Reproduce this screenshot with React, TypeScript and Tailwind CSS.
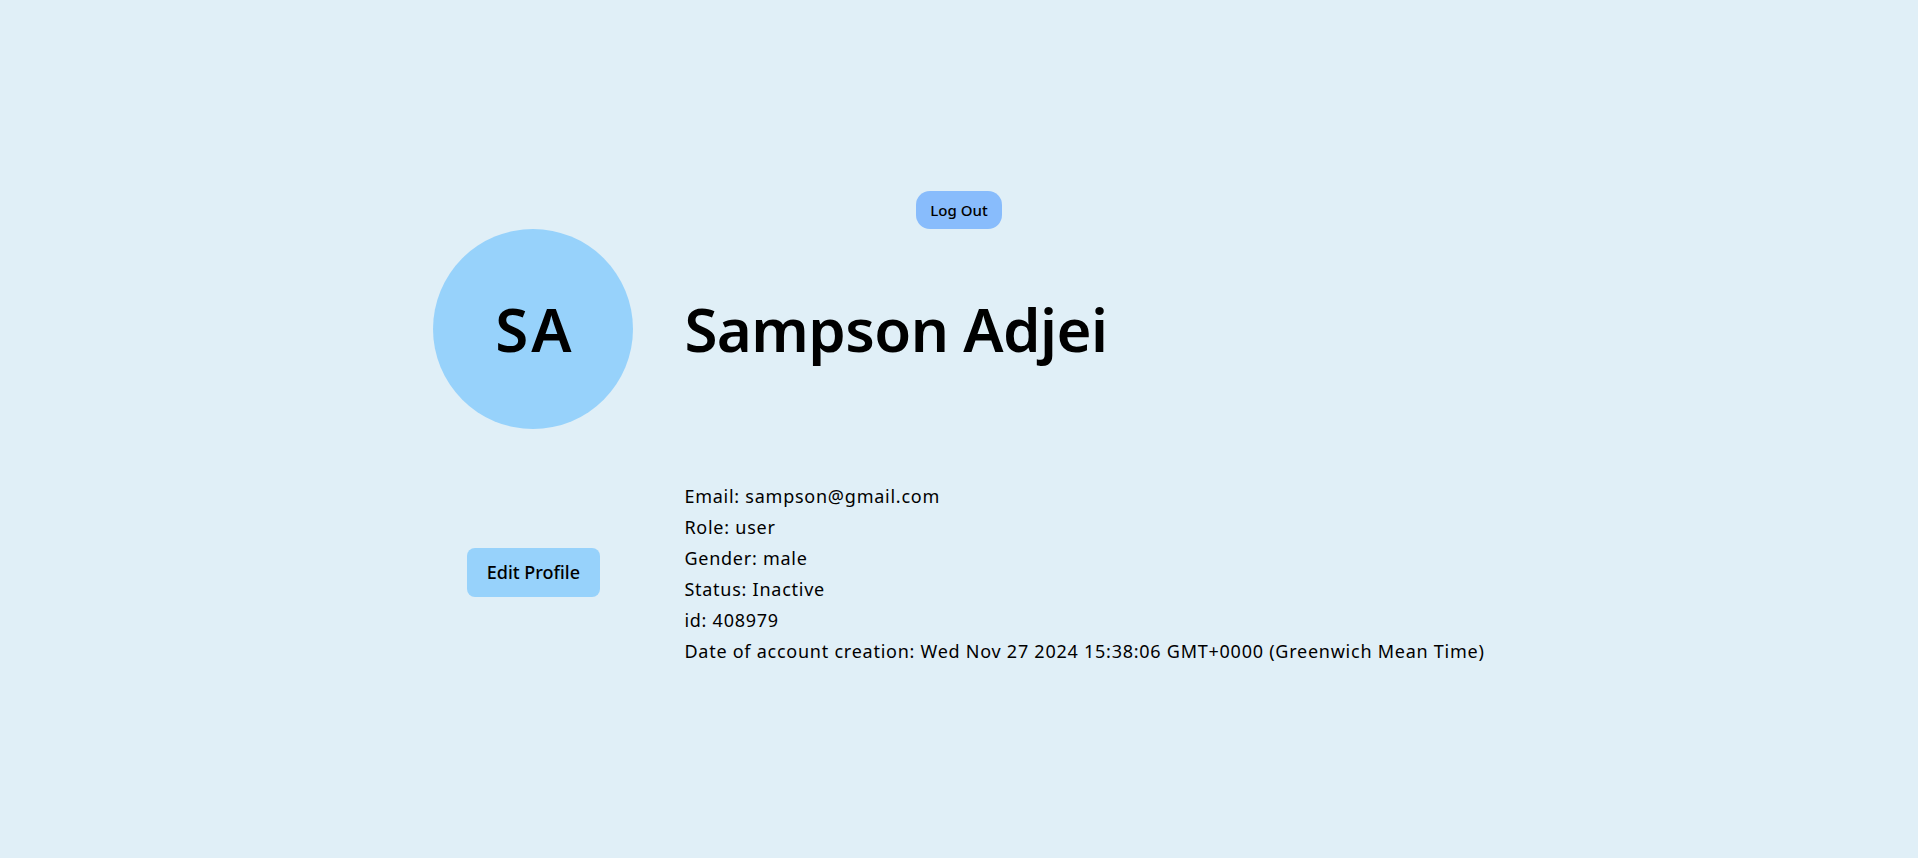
import React from "react";

export default function App() {
  const info = [
    "Email: sampson@gmail.com",
    "Role: user",
    "Gender: male",
    "Status: Inactive",
    "id: 408979",
    "Date of account creation: Wed Nov 27 2024 15:38:06 GMT+0000 (Greenwich Mean Time)",
  ];
  return (
    <div
      className="min-h-screen w-full bg-[#e0eff7] flex flex-col items-center justify-center text-black"
      style={{ fontFamily: '"Noto Sans", Lato, sans-serif' }}
    >
      <button className="h-[38px] w-[86px] rounded-[14px] bg-[#88bcfc] text-[15px] font-medium">
        Log Out
      </button>
      <div className="grid grid-cols-[200px_auto] gap-x-[51px]">
        <div className="w-[200px] h-[200px] rounded-full bg-[#97d2fb] flex items-center justify-center">
          <span className="text-[60px] font-semibold leading-none tracking-[3px] pl-[3px]">SA</span>
        </div>
        <div className="flex items-center">
          <h1 className="text-[60px] font-semibold leading-none tracking-[-0.6px]">Sampson Adjei</h1>
        </div>
        <div className="pt-[48px] flex items-center justify-center">
          <button className="h-[49px] w-[133px] rounded-[8px] bg-[#97d2fb] text-[18px] font-medium">
            Edit Profile
          </button>
        </div>
        <div className="pt-[52px] flex flex-col">
          {info.map((t) => (
            <p key={t} className="text-[18px] leading-[31px] tracking-[0.75px]">
              {t}
            </p>
          ))}
        </div>
      </div>
    </div>
  );
}
